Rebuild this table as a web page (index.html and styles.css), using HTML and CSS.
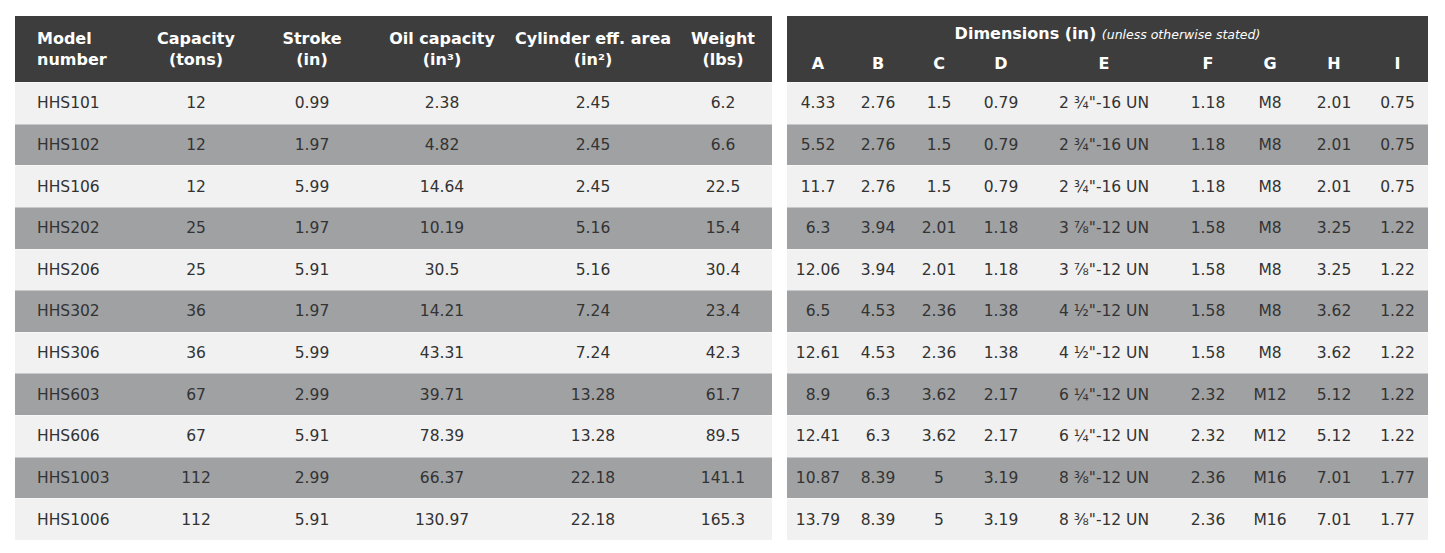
FILE: index.html
```html
<!DOCTYPE html>
<html>
<head>
<meta charset="utf-8">
<link rel="stylesheet" href="styles.css">
</head>
<body>
<div class="page">
  <div class="tbl main">
    <div class="head">
      <div class="hc left">Model<br>number</div>
      <div class="hc">Capacity<br>(tons)</div>
      <div class="hc">Stroke<br>(in)</div>
      <div class="hc">Oil capacity<br>(in³)</div>
      <div class="hc">Cylinder eff. area<br>(in²)</div>
      <div class="hc">Weight<br>(lbs)</div>
    </div>
    <div class="row"><div class="c left">HHS101</div><div class="c">12</div><div class="c">0.99</div><div class="c">2.38</div><div class="c">2.45</div><div class="c">6.2</div></div>
    <div class="row"><div class="c left">HHS102</div><div class="c">12</div><div class="c">1.97</div><div class="c">4.82</div><div class="c">2.45</div><div class="c">6.6</div></div>
    <div class="row"><div class="c left">HHS106</div><div class="c">12</div><div class="c">5.99</div><div class="c">14.64</div><div class="c">2.45</div><div class="c">22.5</div></div>
    <div class="row"><div class="c left">HHS202</div><div class="c">25</div><div class="c">1.97</div><div class="c">10.19</div><div class="c">5.16</div><div class="c">15.4</div></div>
    <div class="row"><div class="c left">HHS206</div><div class="c">25</div><div class="c">5.91</div><div class="c">30.5</div><div class="c">5.16</div><div class="c">30.4</div></div>
    <div class="row"><div class="c left">HHS302</div><div class="c">36</div><div class="c">1.97</div><div class="c">14.21</div><div class="c">7.24</div><div class="c">23.4</div></div>
    <div class="row"><div class="c left">HHS306</div><div class="c">36</div><div class="c">5.99</div><div class="c">43.31</div><div class="c">7.24</div><div class="c">42.3</div></div>
    <div class="row"><div class="c left">HHS603</div><div class="c">67</div><div class="c">2.99</div><div class="c">39.71</div><div class="c">13.28</div><div class="c">61.7</div></div>
    <div class="row"><div class="c left">HHS606</div><div class="c">67</div><div class="c">5.91</div><div class="c">78.39</div><div class="c">13.28</div><div class="c">89.5</div></div>
    <div class="row"><div class="c left">HHS1003</div><div class="c">112</div><div class="c">2.99</div><div class="c">66.37</div><div class="c">22.18</div><div class="c">141.1</div></div>
    <div class="row"><div class="c left">HHS1006</div><div class="c">112</div><div class="c">5.91</div><div class="c">130.97</div><div class="c">22.18</div><div class="c">165.3</div></div>
  </div>

  <div class="tbl dims">
    <div class="head">
      <div class="title">Dimensions (in) <span class="note">(unless otherwise stated)</span></div>
      <div class="letters">
        <div class="hc">A</div><div class="hc">B</div><div class="hc">C</div><div class="hc">D</div><div class="hc">E</div><div class="hc">F</div><div class="hc">G</div><div class="hc">H</div><div class="hc">I</div>
      </div>
    </div>
    <div class="row"><div class="c">4.33</div><div class="c">2.76</div><div class="c">1.5</div><div class="c">0.79</div><div class="c">2 ¾"-16 UN</div><div class="c">1.18</div><div class="c">M8</div><div class="c">2.01</div><div class="c">0.75</div></div>
    <div class="row"><div class="c">5.52</div><div class="c">2.76</div><div class="c">1.5</div><div class="c">0.79</div><div class="c">2 ¾"-16 UN</div><div class="c">1.18</div><div class="c">M8</div><div class="c">2.01</div><div class="c">0.75</div></div>
    <div class="row"><div class="c">11.7</div><div class="c">2.76</div><div class="c">1.5</div><div class="c">0.79</div><div class="c">2 ¾"-16 UN</div><div class="c">1.18</div><div class="c">M8</div><div class="c">2.01</div><div class="c">0.75</div></div>
    <div class="row"><div class="c">6.3</div><div class="c">3.94</div><div class="c">2.01</div><div class="c">1.18</div><div class="c">3 ⅞"-12 UN</div><div class="c">1.58</div><div class="c">M8</div><div class="c">3.25</div><div class="c">1.22</div></div>
    <div class="row"><div class="c">12.06</div><div class="c">3.94</div><div class="c">2.01</div><div class="c">1.18</div><div class="c">3 ⅞"-12 UN</div><div class="c">1.58</div><div class="c">M8</div><div class="c">3.25</div><div class="c">1.22</div></div>
    <div class="row"><div class="c">6.5</div><div class="c">4.53</div><div class="c">2.36</div><div class="c">1.38</div><div class="c">4 ½"-12 UN</div><div class="c">1.58</div><div class="c">M8</div><div class="c">3.62</div><div class="c">1.22</div></div>
    <div class="row"><div class="c">12.61</div><div class="c">4.53</div><div class="c">2.36</div><div class="c">1.38</div><div class="c">4 ½"-12 UN</div><div class="c">1.58</div><div class="c">M8</div><div class="c">3.62</div><div class="c">1.22</div></div>
    <div class="row"><div class="c">8.9</div><div class="c">6.3</div><div class="c">3.62</div><div class="c">2.17</div><div class="c">6 ¼"-12 UN</div><div class="c">2.32</div><div class="c">M12</div><div class="c">5.12</div><div class="c">1.22</div></div>
    <div class="row"><div class="c">12.41</div><div class="c">6.3</div><div class="c">3.62</div><div class="c">2.17</div><div class="c">6 ¼"-12 UN</div><div class="c">2.32</div><div class="c">M12</div><div class="c">5.12</div><div class="c">1.22</div></div>
    <div class="row"><div class="c">10.87</div><div class="c">8.39</div><div class="c">5</div><div class="c">3.19</div><div class="c">8 ⅜"-12 UN</div><div class="c">2.36</div><div class="c">M16</div><div class="c">7.01</div><div class="c">1.77</div></div>
    <div class="row"><div class="c">13.79</div><div class="c">8.39</div><div class="c">5</div><div class="c">3.19</div><div class="c">8 ⅜"-12 UN</div><div class="c">2.36</div><div class="c">M16</div><div class="c">7.01</div><div class="c">1.77</div></div>
  </div>
</div>
</body>
</html>
```

FILE: styles.css
```css
* { box-sizing: border-box; }
html, body { margin: 0; padding: 0; background: #ffffff; }
body {
  font-family: "DejaVu Sans", "Liberation Sans", sans-serif;
  color: #333333;
}
.page {
  display: flex;
  gap: 15px;
  padding: 16px 0 0 15px;
}
.tbl { display: flex; flex-direction: column; }
.main { width: 757px; }
.dims { width: 641px; }

.main .head, .main .row {
  display: grid;
  grid-template-columns: 125px 112px 120px 140px 162px 98px;
}
.dims .letters, .dims .row {
  display: grid;
  grid-template-columns: 62px 58px 64px 60px 146px 62px 62px 66px 61px;
}

.head {
  background: #3d3d3d;
  color: #ffffff;
  height: 66px;
  font-weight: bold;
  font-size: 16px;
}
.main .head { align-items: center; }
.hc {
  text-align: center;
  line-height: 21px;
}
.left { text-align: left; padding-left: 22px; }

.dims .head {
  display: flex;
  flex-direction: column;
  padding-top: 8px;
}
.title {
  text-align: center;
  line-height: 20px;
}
.note {
  font-weight: normal;
  font-style: italic;
  font-size: 12.5px;
}
.letters { margin-top: 9px; }
.letters .hc { line-height: 20px; }

.row {
  height: 41.64px;
  align-items: center;
  font-size: 15.5px;
  background: #f1f1f1;
  border-top: 1px solid #f8f8f8;
}
.row:nth-child(odd) { background: #a0a1a3; border-top-color: #c8c9ca; }
.c { text-align: center; white-space: nowrap; }
.main .c.left { text-align: left; }
```
